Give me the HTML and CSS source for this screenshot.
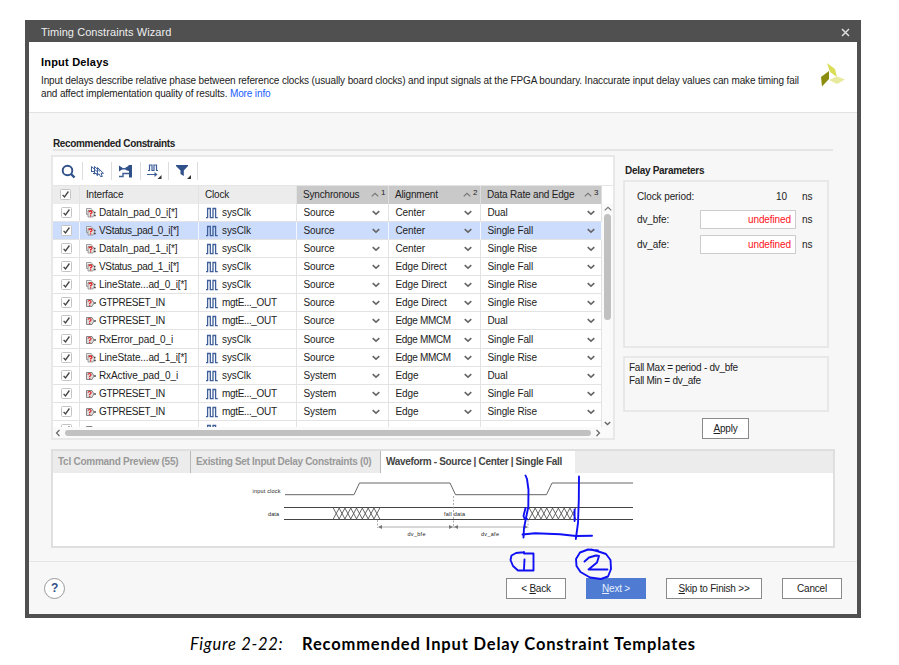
FILE: index.html
```
<!DOCTYPE html>
<html lang="en">
<head>
<meta charset="utf-8">
<title>Timing Constraints Wizard</title>
<link rel="stylesheet" href="styles.css">
</head>
<body>
<svg class="defs" width="0" height="0">
  <symbol id="clock" viewBox="0 0 12 12"><path d="M0 10.7H1.6V1.5H4.3V10.7H7V1.5H9.6V10.7H11.8" fill="none" stroke="#3d5e99" stroke-width="1.3"/></symbol>
  <symbol id="port" viewBox="0 0 10 9"><path d="M.5 1H6L8 4.5 6 8H.5Z" fill="#ddd" stroke="#777" stroke-width=".9"/><path d="M8 4.5H10" stroke="#555" stroke-width="1.6"/><path d="M2 3.2Q2.1 2 3.6 2T5 3.4Q5 4.2 3.7 4.8V5.5M3.7 6.3V7.4" fill="none" stroke="#e02020" stroke-width="1.2"/></symbol>
  <symbol id="bus" viewBox="0 0 10 10"><path d="M.5 .5H5L6.6 2V6.5H.5Z" fill="#eee" stroke="#888" stroke-width=".8"/><path d="M2 2.5H7L8.500 5.700 7 9H2Z" fill="#e4e4e4" stroke="#888" stroke-width=".8"/><path d="M8 4.5H9.5M8 7.5H9.7" stroke="#444" stroke-width="1.5"/><path d="M3 4.2Q3.1 3 4.5 3T6 4.3Q6 5.1 4.6 5.7V6.4M4.6 7.2V8.4" fill="none" stroke="#e02020" stroke-width="1.3"/></symbol>
  <symbol id="down" viewBox="0 0 8 6"><path d="M.7 1.2 4 4.2 7.3 1.2" fill="none" stroke="#666" stroke-width="1.6"/></symbol>
  <symbol id="up" viewBox="0 0 8 6"><path d="M.7 4.4 4 1.4 7.3 4.4" fill="none" stroke="#777" stroke-width="1.2"/></symbol>
  <symbol id="check" viewBox="0 0 11 11"><rect x=".5" y=".5" width="10" height="10" rx="1" fill="#fff" stroke="#c4c4c4"/><path d="M2.6 5.8 4.5 8 8.4 2.5" fill="none" stroke="#444" stroke-width="1.3"/></symbol>
</svg>
<main class="dialog">
  <div class="titlebar"><span>Timing Constraints Wizard</span>
    <svg width="9" height="9" viewBox="0 0 9 9"><path d="M1 1 8 8M8 1 1 8" stroke="#ddd" stroke-width="1.5"/></svg></div>
  <header class="intro">
    <div><h1>Input Delays</h1>
      <p>Input delays describe relative phase between reference clocks (usually board clocks) and input signals at the FPGA boundary. Inaccurate input delay values can make timing fail<br><span class="l2">and affect implementation quality of results. <a>More info</a></span></p></div>
    <svg class="logo" width="24" height="24" viewBox="0 0 24 24"><path d="M6 0 14 6 16 14 9 9Z" fill="#dadd55"/><path d="M0 14 8 8V16L1 23.5Z" fill="#8b8c0d"/><path d="M8 17 16 13.5 24 16.5 16 21Z" fill="#e7e99c"/></svg>
  </header>
  <div class="body">
    <h2 class="section">Recommended Constraints</h2>
    <div class="columns">
      <section class="tablebox">
        <div class="toolbar">
          <span class="tool"><svg width="15" height="15" viewBox="0 0 15 15"><circle cx="6.500" cy="6.500" r="4.800" fill="none" stroke="#2f5088" stroke-width="1.9"/><path d="M10 10 13.500 13.500" stroke="#2f5088" stroke-width="2.4"/></svg></span>
          <span class="tool"><svg width="15" height="15" viewBox="0 0 15 15"><path d="M1.500 2.500 7 7.500M1.500 2.500V7M1 7.500H5M4.500 2.500 10 7.500M4.500 2.500V10L6 9 7.500 12M7.500 3.500V11L9 9.800 10.500 12.500H12.300L11 9.300H13.500L7.500 3.500M3 9.500H6" fill="none" stroke="#3d5e99" stroke-width="1"/></svg></span>
          <span class="tool"><svg width="15" height="15" viewBox="0 0 15 15"><path d="M1 1.500 5.500 4.500 1 7.500Z M7.500 3.500 10.500 2V1H14V13.500H11V7L7.500 6Z" fill="#2f5088"/><path d="M4 4.700H9M1 12.500H5V9.500H11" fill="none" stroke="#3d5e99" stroke-width="1.400"/></svg></span>
          <span class="tool"><svg width="15" height="15" viewBox="0 0 15 15"><path d="M1 6.500H2.500V1H5V6.500H7V1H9.500V6.500H11M0 10.500H8" fill="none" stroke="#3d5e99" stroke-width="1.2"/><path d="M7.500 8 10.500 10.500 7.500 13Z" fill="#3d5e99"/><path d="M14.500 11V15H10.500Z" fill="#333"/></svg></span>
          <span class="tool"><svg width="15" height="15" viewBox="0 0 15 15"><path d="M0 1H12V2L7.800 6.500V12L4.500 10V6.500L0 2Z" fill="#2f5088"/><path d="M15 11V15H11Z" fill="#333"/></svg></span>
        </div>
        <div class="tablewrap">
          <div class="viewport">
            <div class="row head"><span class="chk"><svg width="11" height="11"><use href="#check"/></svg></span><span>Interface</span><span>Clock</span>
              <span class="sorted">Synchronous<svg width="8" height="6"><use href="#up"/></svg><sup>1</sup></span>
              <span class="sorted">Alignment<svg width="8" height="6"><use href="#up"/></svg><sup>2</sup></span>
              <span class="sorted">Data Rate and Edge<svg width="8" height="6"><use href="#up"/></svg><sup>3</sup></span></div>
            <div id="rows"></div>
          </div>
          <div class="vscroll"><svg width="8" height="6"><use href="#up"/></svg><i></i><svg class="vdown" width="7" height="5"><use href="#down"/></svg></div>
        </div>
        <div class="hscroll"><svg width="6" height="8" viewBox="0 0 6 8"><path d="M4.5 1 1.5 4 4.5 7" fill="none" stroke="#666" stroke-width="1.2"/></svg><i></i><svg width="6" height="8" viewBox="0 0 6 8"><path d="M1.5 1 4.5 4 1.5 7" fill="none" stroke="#666" stroke-width="1.2"/></svg></div>
      </section>
      <aside class="params">
        <h2>Delay Parameters</h2>
        <div class="panel fields">
          <label>Clock period:</label><span class="period">10</span><span>ns</span>
          <label>dv_bfe:</label><span class="input">undefined</span><span>ns</span>
          <label>dv_afe:</label><span class="input">undefined</span><span>ns</span>
        </div>
        <div class="panel formula">Fall Max = period - dv_bfe<br>Fall Min = dv_afe</div>
        <button class="apply"><u>A</u>pply</button>
      </aside>
    </div>
    <section class="tabs">
      <nav><span class="t1">Tcl Command Preview (55)</span><span class="t2">Existing Set Input Delay Constraints (0)</span><span class="active">Waveform - Source | Center | Single Fall</span></nav>
      <svg class="wave" width="780" height="73" viewBox="53 473 780 73">
        <g fill="none" stroke="#666">
          <path d="M285 494.7H354L359.5 483H450L455.5 494.7H546.5L552 483H633"/>
          <path d="M284 507.5H633M284 519.5H633" stroke="#444"/>
          <path id="hatch" d="" stroke-width=".9" stroke="#555"/>
          <path d="M377.5 520V528M453.5 496V528M528 520V528" stroke="#999" stroke-dasharray="2 1.5" stroke-width=".8"/>
          <path d="M379 527H527" stroke="#999" stroke-width=".8"/>
        </g>
        <path d="M378 527 382 525V529ZM453 527 449 525V529ZM454 527 458 525V529ZM528 527 524 525V529Z" fill="#777"/>
        <g class="wtext"><text x="252.500" y="492.500" textLength="28">input clock</text><text x="268" y="515.500" textLength="11">data</text><text x="444" y="515.500" textLength="21">fall data</text><text x="407.500" y="536" textLength="18">dv_bfe</text><text x="481" y="536" textLength="18">dv_afe</text></g>
      </svg>
    </section>
  </div>
  <footer>
    <span class="help">?</span>
    <button class="w60">&lt; <u>B</u>ack</button><button class="w60 primary"><u>N</u>ext &gt;</button><button class="w96"><u>S</u>kip to Finish &gt;&gt;</button><button class="w60">Cancel</button>
  </footer>
</main>
<p class="caption"><em>Figure 2-22:</em><strong>Recommended Input Delay Constraint Templates</strong></p>
<svg class="ink" width="132" height="112" viewBox="505 470 132 112"><g fill="none" stroke="#1010f4" stroke-width="1.9" stroke-linecap="round" stroke-linejoin="round">
  <path d="M525.500 475.500 527 479 528.500 490 528.300 507 526 518 524 528 523.500 537.500"/>
  <path d="M525.500 508 523.500 516 524.500 518.500 527 519"/>
  <path d="M579 476.500 578.800 500 578 523 575.800 539M574.600 509.500V521"/>
  <path d="M522.500 534.500 535 533.300 560 534.200 576 536 592 535.700"/>
  <path d="M523.500 552.200 516 553 511.500 555.500 510.500 560 513 566 518 570.500H533.500V553.500H524V552M524.500 559.500 524 569"/>
  <path d="M598 550.500 588 549.500 580 552.500 576 559 576.500 566 580.500 572 590 577.500 601 579 608 576.500 611 569 610.500 560 606 554 597 551 591 549.500"/>
  <path d="M584.500 561.500 589 557.500 596 555.500 599 556 597 562.500 588.500 569.500 607.500 569.500"/>
</g></svg>
<script src="script.js"></script>
</body>
</html>
```
FILE: styles.css
```
* { box-sizing: border-box; }
body { margin: 0; width: 899px; height: 665px; overflow: hidden; background: #fff; position: relative; font: 10px/12px "Liberation Sans", Arial, sans-serif; color: #222; letter-spacing: -.1px; }
h1, h2, p { margin: 0; }
svg { display: block; flex: none; }
.defs { position: absolute; }
u { text-underline-offset: 1px; }
.dialog { width: 836px; height: 598px; margin: 20px 0 0 25px; border: solid #505050; border-width: 0 4px 4px; background: #f7f7f7; display: flex; flex-direction: column; }
.titlebar { height: 22px; background: #505050; color: #eee; font-size: 11px; padding: 2px 7px 0 12px; display: flex; align-items: center; justify-content: space-between; }
.titlebar span { letter-spacing: .07px; }
.intro { height: 71px; background: #fff; border-bottom: 1px solid #e2e2e2; padding: 13px 12px 0; display: flex; justify-content: space-between; }
.intro h1 { font-size: 11px; line-height: 14px; color: #000; margin-bottom: 6px; letter-spacing: .2px; }
.intro p { line-height: 12.5px; white-space: nowrap; letter-spacing: -.128px; }
.intro .l2 { letter-spacing: -.13px; }
.intro a { color: #2060ff; }
.logo { margin-top: 8px; }
.body { height: 449px; border-bottom: 1px solid #e5e5e5; padding: 25px 22px 0; }
h2 { font-size: 10px; line-height: 12px; color: #222; letter-spacing: -.3px; }
.section { height: 14px; margin: -1px 2px 0 2px; padding-top: 1px; border-bottom: 2px solid #e5e5e5; white-space: nowrap; letter-spacing: -.35px; }
.columns { display: flex; gap: 8px; height: 285px; margin-top: 4px; }
.tablebox { width: 564px; border: 2px solid #e8e8e8; background: #fff; display: flex; flex-direction: column; }
.toolbar { height: 29px; border-bottom: 1px solid #e5e5e5; display: flex; align-items: center; padding: 0 0 0 1.500px; }
.tool { width: 28.700px; height: 18px; border-right: 1px solid #ddd; display: flex; align-items: center; justify-content: center; }
.tablewrap { display: flex; height: 241px; }
.viewport { width: 549px; overflow: hidden; }
.row { display: grid; grid-template-columns: 27px 119px 98px 92px 92px 121px; height: 18.150px; }
.row > span { display: flex; align-items: center; padding-left: 6px; padding-top: 1px; border-right: 1px solid #e3e3e3; border-bottom: 1px solid #e3e3e3; white-space: nowrap; }
.row .chk { padding-left: 8px; padding-top: 0; }
.head { height: 17.500px; background: #ececec; }
.head > span { border-bottom: 0; letter-spacing: -.18px; }
.head .chk { padding-left: 7px; }
.head .sorted { background: #c9c9c9; border-right-color: #ddd; }
.sorted svg { margin-left: auto; }
.head sup { font-size: 8px; line-height: 8px; width: 9px; padding-left: 2px; margin-top: -4px; }
.selected { background: #ccdcfd; }
.selected > span { border-right-color: #f4f7ff; }
.name svg { margin-right: 3px; }
.caps { letter-spacing: -.33px; }
.row .direct { letter-spacing: -.15px; }
.clk svg { margin: 0 4px 0 1px; }
.pick svg { margin: 0 8px 0 auto; }
.pick:last-child svg { margin-right: 6px; }
.row .pick { padding-left: 6.500px; }
.vscroll { width: 11px; margin-top: 18px; background: #fafafa; display: flex; flex-direction: column; align-items: center; padding: 2px 0 0; }
.vscroll i { width: 7px; height: 106px; background: #c1c1c1; border-radius: 4px; margin-top: 2px; }
.vdown { margin-top: auto; margin-bottom: 1px; }
.hscroll { flex: 1; display: flex; align-items: center; gap: 4px; padding: 0 0 0 2px; background: #fafafa; }
.hscroll i { width: 526px; height: 6px; border-radius: 3px; background: #c1c1c1; }
.params { width: 206px; display: flex; flex-direction: column; padding-top: 10px; }
.params h2 { margin: 0 0 3px 2px; }
.panel { border: 2px solid #e8e8e8; }
.fields { height: 168px; display: grid; grid-template-columns: 63px 96px 1fr; grid-template-rows: 15px 19px 19px; row-gap: 6px; padding: 7px 0 0 12px; align-content: start; align-items: center; }
.fields > span:nth-child(3n) { padding-left: 6px; }
.period { text-align: right; padding-right: 9px; }
.input { border: 1px solid #ccc; background: #fff; color: #f12; height: 19px; line-height: 17px; text-align: right; padding-right: 4px; }
.formula { margin-top: 8px; height: 56px; padding: 4px 4px; line-height: 12.500px; letter-spacing: -.27px; }
button { font: inherit; color: #222; background: #fff; border: 1px solid #8a8a8a; height: 21px; padding: 1px 0 0; white-space: nowrap; letter-spacing: -.2px; }
.apply { width: 47px; margin: 6px 0 0 79px; }
.tabs { margin-top: 9px; height: 99px; border: 2px solid #dfdfdf; background: #fff; }
.tabs nav { height: 22px; background: #ececec; display: flex; font-weight: bold; color: #999; line-height: 22px; white-space: nowrap; letter-spacing: -.26px; }
.t1, .t2 { border-right: 1px solid #bbb; padding-left: 5px; }
.t1 { width: 138px; } .t2 { width: 190px; }
.tabs .t2 { letter-spacing: -.3px; }
.tabs .active { width: 194px; padding-left: 5px; background: #fff; color: #444; letter-spacing: -.33px; }
.wtext { font-size: 5.500px; fill: #222; letter-spacing: 0; }
footer { display: flex; align-items: center; gap: 20px; padding: 0 15px 0 15px; height: 52px; }
.help { width: 21px; height: 21px; border: 1px solid #999; border-radius: 50%; background: #fff; color: #2f5088; font-weight: bold; font-size: 12px; line-height: 19px; text-align: center; margin-right: auto; }
.w60 { width: 60px; } .w96 { width: 96px; }
.primary { background: #4f7cd2; border-color: #4f7cd2; color: #e7efff; }
.caption { margin: 16px 0 0 190px; font: 16.500px/20px Lato, sans-serif; color: #000; white-space: nowrap; display: flex; }
.caption em { width: 112px; letter-spacing: .7px; }
.caption strong { letter-spacing: .84px; }
.ink { position: absolute; left: 505px; top: 470px; }
```
FILE: script.js
```
const data = [
  ['bus', 'DataIn_pad_0_i[*]', 'sysClk', 'Source', 'Center', 'Dual'],
  ['bus', 'VStatus_pad_0_i[*]', 'sysClk', 'Source', 'Center', 'Single Fall'],
  ['bus', 'DataIn_pad_1_i[*]', 'sysClk', 'Source', 'Center', 'Single Rise'],
  ['bus', 'VStatus_pad_1_i[*]', 'sysClk', 'Source', 'Edge Direct', 'Single Fall'],
  ['bus', 'LineState...ad_0_i[*]', 'sysClk', 'Source', 'Edge Direct', 'Single Rise'],
  ['port', 'GTPRESET_IN', 'mgtE..._OUT', 'Source', 'Edge Direct', 'Single Rise'],
  ['port', 'GTPRESET_IN', 'mgtE..._OUT', 'Source', 'Edge MMCM', 'Dual'],
  ['port', 'RxError_pad_0_i', 'sysClk', 'Source', 'Edge MMCM', 'Single Fall'],
  ['bus', 'LineState...ad_1_i[*]', 'sysClk', 'Source', 'Edge MMCM', 'Single Rise'],
  ['port', 'RxActive_pad_0_i', 'sysClk', 'System', 'Edge', 'Dual'],
  ['port', 'GTPRESET_IN', 'mgtE..._OUT', 'System', 'Edge', 'Single Fall'],
  ['port', 'GTPRESET_IN', 'mgtE..._OUT', 'System', 'Edge', 'Single Rise'],
  ['port', '', '', '', '', '']
];
const icon = (id, w, h) => `<svg width="${w}" height="${h}"><use href="#${id}"/></svg>`;
const label = t => /[A-Z]{2}/.test(t) ? `<span class="caps">${t}</span>` : t;
document.getElementById('rows').innerHTML = data.map((r, i) =>
  `<div class="row${i === 1 ? ' selected' : ''}"><span class="chk">${icon('check', 11, 11)}</span>` +
  `<span class="name">${icon(r[0], 10, 10)}${label(r[1])}</span><span class="clk">${icon('clock', 12, 12)}${label(r[2])}</span>` +
  r.slice(3).map(t => `<span class="pick">${label(t)}${t ? icon('down', 8, 6) : ''}</span>`).join('') + '</div>').join('');
let d = '';
for (const x0 of [333, 529]) {
  for (let i = 0; i < 8; i++) {
    const x = x0 + i * 5.8;
    d += `M${x} 507.5L${x + 6.5} 519.5M${x + 6.5} 507.5L${x} 519.5`;
  }
}
document.getElementById('hatch').setAttribute('d', d);
```
